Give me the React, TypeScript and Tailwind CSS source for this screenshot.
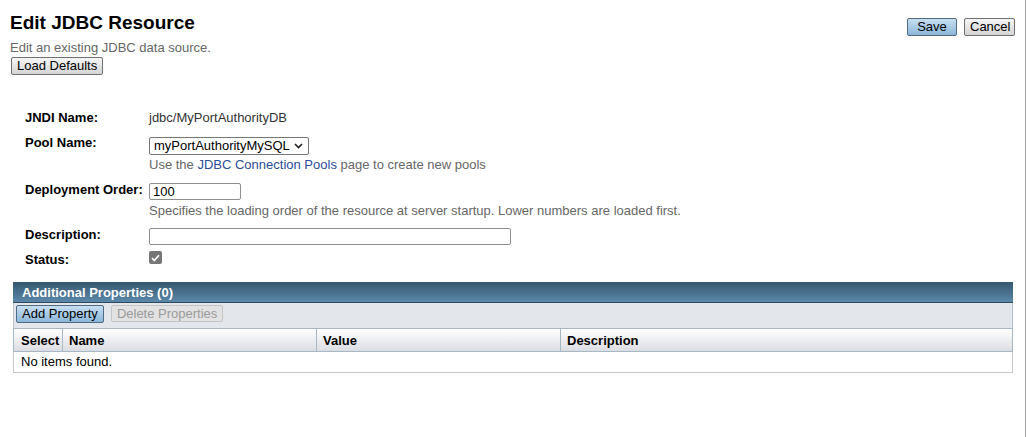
import React from 'react';

const grayBtn =
  'h-[18px] px-[5px] whitespace-nowrap text-[13px] leading-[16px] text-black border border-[#707070] rounded-[2px] bg-gradient-to-b from-[#f6f6f6] to-[#d5d5d5]';
const blueBtn =
  'h-[18px] px-[5px] whitespace-nowrap text-[13px] leading-[16px] text-black border border-[#4f6a82] rounded-[2px] bg-gradient-to-b from-[#c7dff1] to-[#8cb7d9]';

const FormRow: React.FC<{ label: string; className?: string; children: React.ReactNode }> = ({
  label,
  className = '',
  children,
}) => (
  <div className={`flex items-start ${className}`}>
    <div className="w-[124px] shrink-0 font-bold leading-[15px] text-black">{label}</div>
    <div className="flex flex-col">{children}</div>
  </div>
);

export default function App() {
  return (
    <div className="w-[1026px] h-[437px] bg-white border-r border-[#a3a3a3] font-['Liberation_Sans',Arial,sans-serif] text-[13px] text-[#333]">
      {/* page title */}
      <div className="flex justify-between pl-[10px] pr-[10px] pt-[11px]">
        <div className="flex flex-col items-start">
          <h1 className="text-[19px] leading-[24px] font-bold text-black">Edit JDBC Resource</h1>
          <p className="mt-[5px] leading-[15px] text-[#666]">Edit an existing JDBC data source.</p>
          <button className={`${grayBtn} mt-[2px] ml-[1px]`}>Load Defaults</button>
        </div>
        <div className="flex gap-[7px] mt-[7px]">
          <button className={`${blueBtn} w-[50px]`}>Save</button>
          <button className={`${grayBtn} w-[51px]`}>Cancel</button>
        </div>
      </div>

      {/* form */}
      <div className="pl-[25px] mt-[35px]">
        <FormRow label="JNDI Name:">
          <span className="leading-[15px]">jdbc/MyPortAuthorityDB</span>
        </FormRow>

        <FormRow label="Pool Name:" className="mt-[10px]">
          <div className="mt-[2px] w-[160px] h-[18px] flex items-center justify-between pl-[4px] pr-[5px] border border-[#767676] rounded-[2px] text-black leading-[16px]">
            <span>myPortAuthorityMySQL</span>
            <svg width="9" height="6" viewBox="0 0 9 6" fill="none">
              <path d="M1 1l3.5 3.5L8 1" stroke="#222" strokeWidth="1.6" />
            </svg>
          </div>
          <p className="mt-[2px] leading-[15px] text-[#666]">
            Use the <span className="text-[#2b4c97]">JDBC Connection Pools</span> page to create new pools
          </p>
        </FormRow>

        <FormRow label="Deployment Order:" className="mt-[10px]">
          <input
            readOnly
            value="100"
            className="mt-[1px] w-[92px] h-[17px] px-[3px] border border-[#8f8f8f] rounded-[2px] text-black leading-[15px] outline-none"
          />
          <p className="mt-[3px] leading-[15px] text-[#666]">
            Specifies the loading order of the resource at server startup. Lower numbers are loaded first.
          </p>
        </FormRow>

        <FormRow label="Description:" className="mt-[9px]">
          <input
            readOnly
            value=""
            className="mt-[1px] w-[362px] h-[17px] px-[3px] border border-[#8f8f8f] rounded-[2px] outline-none"
          />
        </FormRow>

        <FormRow label="Status:" className="mt-[7px]">
          <div className="-mt-[1px] w-[13px] h-[13px] rounded-[2px] bg-[#767676] flex items-center justify-center">
            <svg width="9" height="8" viewBox="0 0 9 8" fill="none">
              <path d="M1 4.2l2.3 2.3L8 1.2" stroke="#fff" strokeWidth="1.7" />
            </svg>
          </div>
        </FormRow>
      </div>

      {/* additional properties table */}
      <div className="ml-[13px] mr-[12px] mt-[15px]">
        <div className="h-[21px] pl-[9px] leading-[21px] font-bold text-white bg-gradient-to-b from-[#365870] to-[#5b88aa] border-b border-[#2d4a60]">
          Additional Properties (0)
        </div>
        <div className="h-[25px] flex items-start gap-[7px] pl-[2px] pt-[2px] bg-[#e3e6eb] border-x border-[#b8c2cc]">
          <button className={`${blueBtn} h-[17px] leading-[15px]`}>Add Property</button>
          <button className="h-[17px] px-[5px] whitespace-nowrap text-[13px] leading-[15px] text-[#9a9a9a] border border-[#c4c4c4] rounded-[2px] bg-[#e2e2e2]">
            Delete Properties
          </button>
        </div>
        <div className="grid grid-cols-[49px_254px_244px_1fr] h-[24px] font-bold text-black leading-[23px] bg-gradient-to-b from-white to-[#dcdde3] border border-[#a7b7c4]">
          <div className="pl-[7px] border-r border-[#a7b7c4]">Select</div>
          <div className="pl-[6px] border-r border-[#a7b7c4]">Name</div>
          <div className="pl-[6px] border-r border-[#a7b7c4]">Value</div>
          <div className="pl-[6px]">Description</div>
        </div>
        <div className="h-[21px] pl-[7px] leading-[20px] text-black border-x border-b border-[#c4c9ce]">
          No items found.
        </div>
      </div>
    </div>
  );
}
